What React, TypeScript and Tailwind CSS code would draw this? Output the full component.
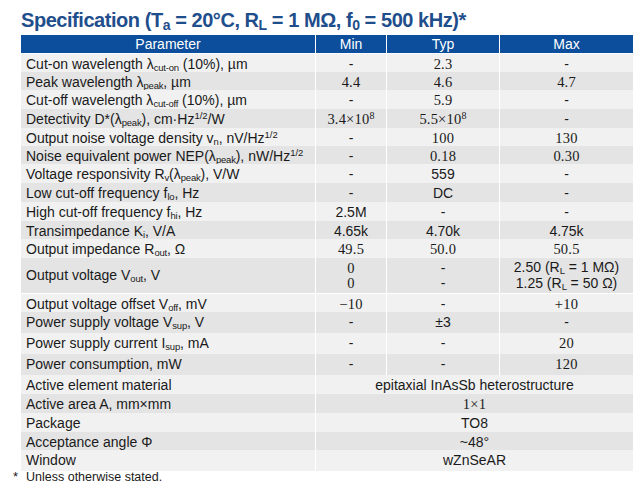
import React from "react";

const SANS = "font-['Liberation_Sans',Arial,sans-serif]";
const SERIF = "font-['Liberation_Serif',serif]";

type Cell = React.ReactNode;

const S = ({ c }: { c: React.ReactNode }) => (
  <span className={`${SERIF} text-[14.5px] tracking-[0.2px]`}>{c}</span>
);
const sub = (t: string) => <span className="text-[9.5px] align-[-2px] tracking-[-0.2px] leading-none">{t}</span>;
const sup = (t: string) => <span className="text-[9.5px] align-[5px] leading-none">{t}</span>;
const supS = (t: string) => <span className="text-[10px] align-[5px] leading-none">{t}</span>;
const D = "-";

type RowDef = {
  label: Cell;
  min?: Cell;
  typ?: Cell;
  max?: Cell;
  span?: Cell;
  h: string;
};

const rows: RowDef[] = [
  { label: <>Cut-on wavelength λ{sub("cut-on")}&nbsp;(10%), µm</>, min: D, typ: <S c="2.3" />, max: D, h: "h-[17px]" },
  { label: <>Peak wavelength λ{sub("peak")}, µm</>, min: <S c="4.4" />, typ: <S c="4.6" />, max: <S c="4.7" />, h: "h-[17px]" },
  { label: <>Cut-off wavelength λ{sub("cut-off")}&nbsp;(10%), µm</>, min: D, typ: <S c="5.9" />, max: D, h: "h-[18px]" },
  { label: <>Detectivity D*(λ{sub("peak")}), cm·Hz{sup("1/2")}/W</>, min: <S c={<>3.4×10{supS("8")}</>} />, typ: <S c={<>5.5×10{supS("8")}</>} />, max: D, h: "h-[18px]" },
  { label: <>Output noise voltage density v{sub("n")}, nV/Hz{sup("1/2")}</>, min: D, typ: <S c="100" />, max: <S c="130" />, h: "h-[17px]" },
  { label: <>Noise equivalent power NEP(λ{sub("peak")}), nW/Hz{sup("1/2")}</>, min: D, typ: <S c="0.18" />, max: <S c="0.30" />, h: "h-[17px]" },
  { label: <>Voltage responsivity R{sub("v")}(λ{sub("peak")}), V/W</>, min: D, typ: "559", max: D, h: "h-[18px]" },
  { label: <>Low cut-off frequency f{sub("lo")}, Hz</>, min: D, typ: "DC", max: D, h: "h-[18px]" },
  { label: <>High cut-off frequency f{sub("hi")}, Hz</>, min: "2.5M", typ: D, max: D, h: "h-[18px]" },
  { label: <>Transimpedance K{sub("i")}, V/A</>, min: "4.65k", typ: "4.70k", max: "4.75k", h: "h-[17px]" },
  { label: <>Output impedance R{sub("out")}, Ω</>, min: <S c="49.5" />, typ: <S c="50.0" />, max: <S c="50.5" />, h: "h-[18px]" },
  {
    label: <>Output voltage V{sub("out")}, V</>,
    min: <div className="flex flex-col leading-[15px] text-center"><S c="0" /><S c="0" /></div>,
    typ: <div className="flex flex-col leading-[15px] text-center"><span>-</span><span>-</span></div>,
    max: (
      <div className="flex flex-col leading-[15px] text-center">
        <span>2.50 (R{sub("L")} = 1 MΩ)</span>
        <span>1.25 (R{sub("L")} = 50 Ω)</span>
      </div>
    ),
    h: "h-[35px]",
  },
  { label: <>Output voltage offset V{sub("off")}, mV</>, min: <S c="−10" />, typ: D, max: <S c="+10" />, h: "h-[17px]" },
  { label: <>Power supply voltage V{sub("sup")}, V</>, min: D, typ: "±3", max: D, h: "h-[20px]" },
  { label: <>Power supply current I{sub("sup")}, mA</>, min: D, typ: D, max: <S c="20" />, h: "h-[20px]" },
  { label: <>Power consumption, mW</>, min: D, typ: D, max: <S c="120" />, h: "h-[20px]" },
  { label: <>Active element material</>, span: "epitaxial InAsSb heterostructure", h: "h-[18px]" },
  { label: <>Active area A, mm×mm</>, span: <S c="1×1" />, h: "h-[18px]" },
  { label: <>Package</>, span: "TO8", h: "h-[18px]" },
  { label: <>Acceptance angle Φ</>, span: "~48°", h: "h-[17px]" },
  { label: <>Window</>, span: "wZnSeAR", h: "h-[17px]" },
];

const tsub = (t: string) => <span className="text-[14px] align-[-3px] leading-none">{t}</span>;

export default function App() {
  return (
    <div className={`w-[641px] h-[494px] bg-white ${SANS} text-[#1a1a1a]`}>
      <div className="pl-[21px] pt-[6px]">
        <h1 className="text-[20px] leading-[29px] font-bold text-[#1f4e8c] tracking-[-0.45px] whitespace-nowrap">
          Specification (T{tsub("a")} = 20°C, R{tsub("L")} = 1 MΩ, f{tsub("0")} = 500 kHz)*
        </h1>
        <div className="w-[612px] flex flex-col gap-px bg-white text-[14px]">
          <div className="grid grid-cols-[294px_70px_112px_133px] gap-px h-[18px] text-white text-[14px] leading-[18px] text-center">
            <div className="bg-[#0c4e9b]">Parameter</div>
            <div className="bg-[#0c4e9b]">Min</div>
            <div className="bg-[#0c4e9b]">Typ</div>
            <div className="bg-[#0c4e9b]">Max</div>
          </div>
          {rows.map((r, i) => {
            const bg = i % 2 === 0 ? "bg-[#f1f1f1]" : "bg-[#e4e4e4]";
            return (
              <div key={i} className={`grid grid-cols-[294px_70px_112px_133px] gap-px ${r.h}`}>
                <div className={`${bg} flex items-center pl-[5px] whitespace-nowrap`}>
                  <span>{r.label}</span>
                </div>
                {r.span !== undefined ? (
                  <div className={`${bg} col-span-3 flex items-center justify-center`}>{r.span}</div>
                ) : (
                  <>
                    <div className={`${bg} flex items-center justify-center`}>{r.min}</div>
                    <div className={`${bg} flex items-center justify-center`}>{r.typ}</div>
                    <div className={`${bg} flex items-center justify-center`}>{r.max}</div>
                  </>
                )}
              </div>
            );
          })}
        </div>
      </div>
      <div className="flex items-start pl-[13px] mt-[2px] text-[12.5px] leading-[16px]">
        <span className="w-[13px] text-[13px]">*</span>
        <span>Unless otherwise stated.</span>
      </div>
    </div>
  );
}
